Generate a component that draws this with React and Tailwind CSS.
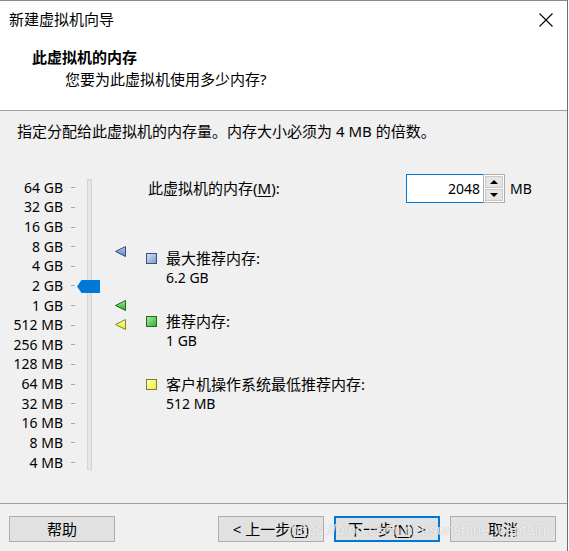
import React from "react";

const FONT = { fontFamily: '"Noto Sans", "Noto Sans CJK SC", sans-serif' };

const scale = [
  "64 GB", "32 GB", "16 GB", "8 GB", "4 GB", "2 GB", "1 GB",
  "512 MB", "256 MB", "128 MB", "64 MB", "32 MB", "16 MB", "8 MB", "4 MB",
];

function Marker({ id, light, dark, stroke }) {
  return (
    <svg width="11" height="11" viewBox="0 0 11 11">
      <defs>
        <linearGradient id={id} x1="0" y1="0" x2="0" y2="1">
          <stop offset="0" stopColor={light} />
          <stop offset="1" stopColor={dark} />
        </linearGradient>
      </defs>
      <polygon points="0.5,5.5 10.5,0.5 10.5,10.5" fill={`url(#${id})`} stroke={stroke} strokeWidth="1" strokeLinejoin="round" />
    </svg>
  );
}

function Square({ from, to, border }) {
  return (
    <div
      className="w-[11px] h-[11px] border"
      style={{ borderColor: border, background: `linear-gradient(135deg, ${from}, ${to})` }}
    />
  );
}

function Legend({ from, to, border, label, value }) {
  return (
    <div className="flex items-start">
      <div className="w-[20px] pt-[5px]">
        <Square from={from} to={to} border={border} />
      </div>
      <div className="leading-[20px]">
        <div className="text-[15px]">{label}</div>
        <div className="text-[14px]">{value}</div>
      </div>
    </div>
  );
}

function Btn({ children, primary }) {
  return (
    <button
      className={
        "w-[106px] h-[26px] bg-[#e1e1e1] text-[15px] leading-none flex items-center justify-center text-black " +
        (primary ? "border-2 border-[#0078d7]" : "border border-[#adadad]")
      }
    >
      {children}
    </button>
  );
}

export default function App() {
  return (
    <div
      className="relative w-[568px] h-[551px] bg-[#f0f0f0] border-t border-r border-t-[#8a8a8a] border-r-[#6e6e6e] flex flex-col text-black overflow-hidden"
      style={FONT}
    >
      {/* Header */}
      <div className="h-[110px] bg-white border-b border-[#a0a0a0] shrink-0">
        <div className="h-[37px] flex items-center justify-between pl-[9px] pr-[14px]">
          <span className="text-[15px]">新建虚拟机向导</span>
          <svg width="14" height="14" viewBox="0 0 14 14">
            <path d="M0.5 0.5 L13.5 13.5 M13.5 0.5 L0.5 13.5" stroke="#000" strokeWidth="1.1" />
          </svg>
        </div>
        <div className="pl-[32px] pt-[9px] text-[15px] font-bold leading-[20px]">此虚拟机的内存</div>
        <div className="pl-[65px] pt-[2px] text-[15px] leading-[20px]">您要为此虚拟机使用多少内存?</div>
      </div>

      {/* Body */}
      <div className="h-[392px] shrink-0">
        <div className="pl-[17px] pt-[10px] leading-[20px] text-[15px]">
          指定分配给此虚拟机的内存量。内存大小必须为 4 MB 的倍数。
        </div>

        <div className="mt-[31px] flex">
          {/* slider */}
          <div className="relative w-[146px] flex shrink-0">
            <div className="pt-[6px] flex flex-col">
              {scale.map((s) => (
                <div key={s} className="h-[19.64px] flex items-center">
                  <span className="w-[63px] text-right text-[14px] leading-none">{s}</span>
                  <span className="ml-[8px] w-[4px] h-px bg-[#a8a8a8]" />
                </div>
              ))}
            </div>
            <div className="ml-[12px] mt-[7px] w-[5px] h-[291px] bg-[#e6e6e6] border border-[#d4d4d4]" />

            {/* thumb */}
            <svg width="23" height="13" viewBox="0 0 23 13" className="absolute left-[77px] top-[108px]">
              <polygon points="0,6.5 4.5,0 23,0 23,13 4.5,13" fill="#0078d7" />
            </svg>
            {/* markers */}
            <div className="absolute left-[115px] top-[74px]">
              <Marker id="mb" light="#b9cbe6" dark="#5f83bd" stroke="#2f4f86" />
            </div>
            <div className="absolute left-[115px] top-[128px]">
              <Marker id="mg" light="#a5e69a" dark="#2fa82a" stroke="#1b6e18" />
            </div>
            <div className="absolute left-[115px] top-[147px]">
              <Marker id="my" light="#ffffb0" dark="#e3e32a" stroke="#86862a" />
            </div>
          </div>

          {/* right content */}
          <div className="flex-1">
            <div className="mt-[2px] h-[29px] flex items-center">
              <span className="ml-[2px] w-[258px] text-[15px]">
                此虚拟机的内存(<span className="underline underline-offset-2">M</span>):
              </span>
              <div className="h-[29px] w-[77px] bg-white border border-[#0078d7] border-r-0 flex items-center justify-end pr-[3px] text-[14px]">
                2048
              </div>
              <div className="h-[29px] w-[22px] border border-[#adadad] bg-white flex flex-col p-px gap-px">
                <div className="flex-1 bg-[#e5e5e5] border border-[#c8c8c8] flex items-center justify-center">
                  <svg width="8" height="4" viewBox="0 0 8 4"><polygon points="0,4 4,0 8,4" fill="#000" /></svg>
                </div>
                <div className="flex-1 bg-[#e5e5e5] border border-[#c8c8c8] flex items-center justify-center">
                  <svg width="8" height="4" viewBox="0 0 8 4"><polygon points="0,0 8,0 4,4" fill="#000" /></svg>
                </div>
              </div>
              <span className="ml-[5px] text-[14px]">MB</span>
            </div>

            <div className="mt-[45px] flex flex-col gap-[23px]">
              <Legend from="#d4e0f2" to="#7d9bcb" border="#33528a" label="最大推荐内存:" value="6.2 GB" />
              <Legend from="#a8e8a0" to="#33b030" border="#1d6f1a" label="推荐内存:" value="1 GB" />
              <Legend from="#ffffc0" to="#eded3a" border="#80802a" label="客户机操作系统最低推荐内存:" value="512 MB" />
            </div>
          </div>
        </div>
      </div>

      {/* Footer */}
      <div className="flex-1 border-t border-[#a0a0a0] pt-[12px] pl-[9px] pr-[11px] flex items-start">
        <Btn>帮助</Btn>
        <div className="flex-1" />
        <div className="flex gap-[10px]">
          <Btn>&lt; 上一步(<span className="underline underline-offset-2">B</span>)</Btn>
          <Btn primary>下一步(<span className="underline underline-offset-2">N</span>) &gt;</Btn>
          <Btn>取消</Btn>
        </div>
      </div>

      {/* watermark */}
      <div
        className="absolute left-[291px] top-[519px] text-[15px] leading-[20px] text-white/80 pointer-events-none whitespace-nowrap"
        style={{ fontFamily: '"Liberation Sans", Arial, sans-serif', textShadow: "0 0 1px rgba(110,110,110,0.5)" }}
      >
        https://blog.csdn.net/sunshine_captain
      </div>
    </div>
  );
}
